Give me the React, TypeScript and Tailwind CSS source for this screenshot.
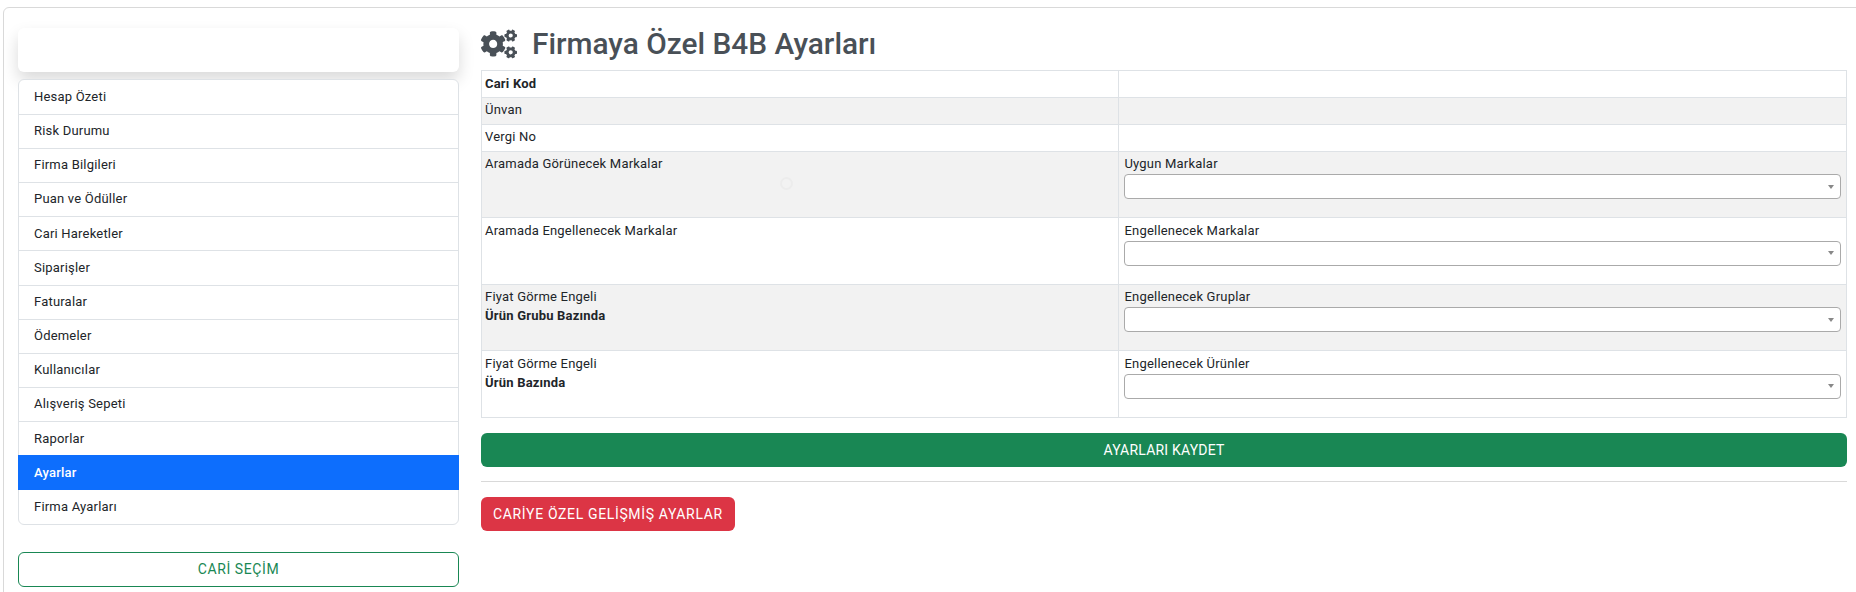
import { FaCogs } from "react-icons/fa";

const menu = [
  "Hesap Özeti",
  "Risk Durumu",
  "Firma Bilgileri",
  "Puan ve Ödüller",
  "Cari Hareketler",
  "Siparişler",
  "Faturalar",
  "Ödemeler",
  "Kullanıcılar",
  "Alışveriş Sepeti",
  "Raporlar",
  "Ayarlar",
  "Firma Ayarları",
];

function SelectRow({
  label,
  sub,
  right,
  gray,
  first,
}: {
  label: string;
  sub?: string;
  right: string;
  gray?: boolean;
  first?: boolean;
}) {
  return (
    <tr className={gray ? "bg-[#f2f2f2]" : "bg-white"}>
      <td
        className={
          "relative border border-[#dee2e6] pl-[3px] pr-1 pb-[3px] align-top leading-[19px] " +
          (first ? "h-[66px] pt-[2px]" : "h-[66.7px] pt-[2.5px]")
        }
      >
        {label}
        {sub && <div className="font-bold">{sub}</div>}
        {first && (
          <div className="absolute left-[298px] top-[25px] w-[13px] h-[13px] rounded-full border-2 border-[#ececec]" />
        )}
      </td>
      <td
        className={
          "border border-[#dee2e6] px-[5px] pb-[3px] align-top leading-[19px] " +
          (first ? "pt-[2px]" : "pt-[2.5px]")
        }
      >
        {right}
        <div className="mt-[1px] h-[25px] bg-white border border-[#aaaaaa] rounded-[4px] flex items-center justify-end pr-[6px]">
          <div className="w-0 h-0 border-x-[3px] border-x-transparent border-t-[4px] border-t-[#888888]" />
        </div>
      </td>
    </tr>
  );
}

export default function App() {
  return (
    <div className="h-[592px] overflow-hidden bg-white pt-[7px] pl-[3px] font-['Roboto',sans-serif] text-[13px] text-[#212529]">
      {/* card runs past the right edge of the window, no right border in view */}
      <div className="h-[640px] -mr-[8px] border border-[#d9d9d9] rounded-[6px] pt-5 pl-[14px] pr-[16px] flex gap-[22px]">
        <div className="w-[441px] shrink-0">
          <div className="h-[44px] bg-white rounded-[6px] shadow-[0_8px_16px_rgba(0,0,0,0.15)]" />
          <div className="mt-[7px] border border-[#dee2e6] rounded-[6px] bg-white">
            {menu.map((item, i) => (
              <div
                key={item}
                className={
                  "flex items-center tracking-[0.2px] " +
                  (item === "Ayarlar"
                    ? "h-[35px] -mx-px pl-[16px] bg-[#0d6efd] text-white font-medium"
                    : i === 0
                      ? "h-[33.6px] pl-[15px] pb-[1px]"
                      : i === 12
                        ? "h-[33.5px] pl-[15px]"
                        : "h-[34.2px] pl-[15px] pb-[1px] border-t border-[#dee2e6]")
                }
              >
                {item}
              </div>
            ))}
          </div>
          <button className="mt-[27px] w-full h-[35px] border border-[#198754] rounded-[6px] text-[14px] text-[#198754] tracking-[0.6px]">
            CARİ SEÇİM
          </button>
        </div>
        <div className="flex-1 min-w-0">
          <div className="h-[42px] pb-[10px] flex items-center gap-[15px] text-[#495057]">
            <FaCogs className="text-[36px] shrink-0" />
            <h1 className="text-[29.8px] font-medium">Firmaya Özel B4B Ayarları</h1>
          </div>
          <table className="w-full border-collapse table-fixed tracking-[0.2px]">
            <colgroup>
              <col className="w-[46.7%]" />
              <col />
            </colgroup>
            <tbody>
              <tr className="bg-white h-[26.5px]">
                <td className="border border-[#dee2e6] pl-[3px] pr-1 font-bold">Cari Kod</td>
                <td className="border border-[#dee2e6] px-1" />
              </tr>
              <tr className="bg-[#f2f2f2] h-[27.5px]">
                <td className="border border-[#dee2e6] pl-[3px] pr-1 pb-[2px]">Ünvan</td>
                <td className="border border-[#dee2e6] px-1" />
              </tr>
              <tr className="bg-white h-[27px]">
                <td className="border border-[#dee2e6] pl-[3px] pr-1 pb-[2px]">Vergi No</td>
                <td className="border border-[#dee2e6] px-1" />
              </tr>
              <SelectRow label="Aramada Görünecek Markalar" right="Uygun Markalar" gray first />
              <SelectRow label="Aramada Engellenecek Markalar" right="Engellenecek Markalar" />
              <SelectRow label="Fiyat Görme Engeli" sub="Ürün Grubu Bazında" right="Engellenecek Gruplar" gray />
              <SelectRow label="Fiyat Görme Engeli" sub="Ürün Bazında" right="Engellenecek Ürünler" />
            </tbody>
          </table>
          <button className="mt-[15px] w-full h-[34px] bg-[#198754] rounded-[6px] text-white text-[14px] tracking-[0.2px]">
            AYARLARI KAYDET
          </button>
          <div className="mt-[14px] border-t border-[#d9d9d9]" />
          <button className="mt-[15px] h-[34px] px-3 bg-[#dc3545] rounded-[6px] text-white text-[14px] tracking-[0.65px]">
            CARİYE ÖZEL GELİŞMİŞ AYARLAR
          </button>
        </div>
      </div>
    </div>
  );
}
